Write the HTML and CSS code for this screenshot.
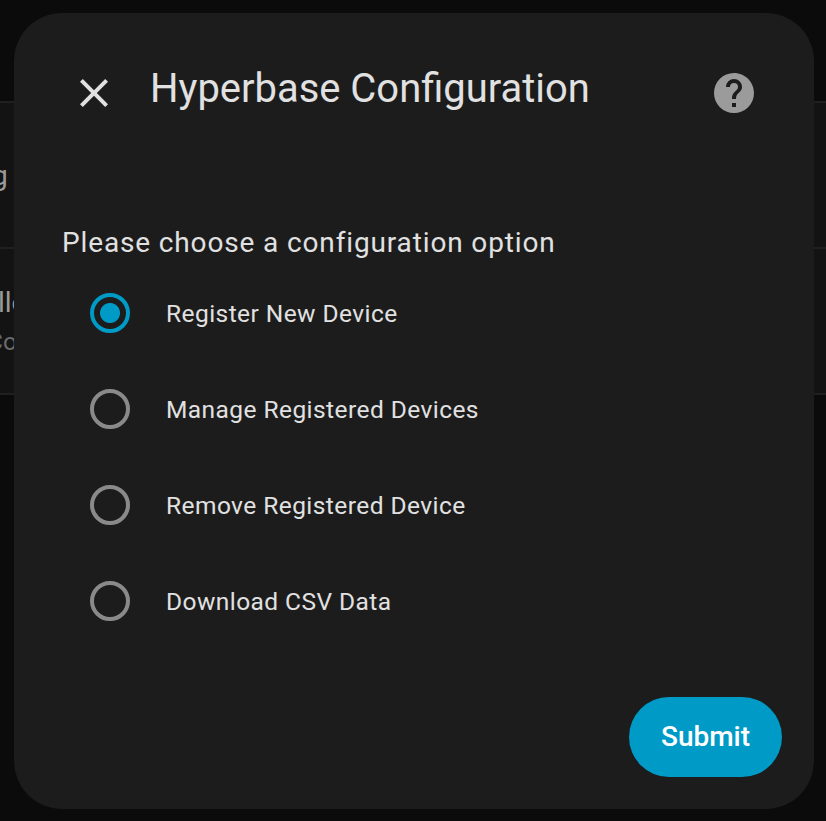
FILE: index.html
```html
<!DOCTYPE html>
<html lang="en">
<head>
<meta charset="utf-8">
<title>Hyperbase Configuration</title>
<link rel="stylesheet" href="styles.css">
</head>
<body>
<div class="backdrop">
  <div class="row-top"></div>
  <div class="row"><span class="primary first">g</span></div>
  <div class="row"><span class="primary">lle</span><span class="secondary">Co</span></div>
</div>
<main class="dialog">
  <header class="header">
    <svg class="close" viewBox="0 0 24 24"><path d="M19 6.41L17.59 5 12 10.59 6.41 5 5 6.41 10.59 12 5 17.59 6.41 19 12 13.41 17.59 19 19 17.59 13.41 12z"/></svg>
    <h1 class="title">Hyperbase Configuration</h1>
    <svg class="help" viewBox="0 0 24 24"><path d="M15.07 11.25l-.9.92C13.45 12.89 13 13.5 13 15h-2v-.5c0-1.11.45-2.11 1.17-2.83l1.24-1.26c.37-.36.59-.86.59-1.41a2 2 0 0 0-2-2 2 2 0 0 0-2 2H8a4 4 0 0 1 4-4 4 4 0 0 1 4 4c0 .88-.36 1.67-.93 2.25M13 19h-2v-2h2M12 2A10 10 0 0 0 2 12a10 10 0 0 0 10 10 10 10 0 0 0 10-10c0-5.53-4.5-10-10-10z"/></svg>
  </header>
  <p class="prompt">Please choose a configuration option</p>
  <div class="options">
    <label class="option"><span class="radio checked"></span><span class="label">Register New Device</span></label>
    <label class="option"><span class="radio"></span><span class="label">Manage Registered Devices</span></label>
    <label class="option"><span class="radio"></span><span class="label">Remove Registered Device</span></label>
    <label class="option"><span class="radio"></span><span class="label">Download CSV Data</span></label>
  </div>
  <footer class="footer"><button class="submit">Submit</button></footer>
</main>
</body>
</html>
```
FILE: styles.css
```css
* { box-sizing: border-box; }
body {
  margin: 0;
  height: 821px;
  overflow: hidden;
  padding: 13px 12px 12px 14px;
  background: #0b0b0b;
  color: #e1e1e1;
  font-family: Roboto, sans-serif;
}
.backdrop { position: absolute; inset: 0; }
.row-top { height: 101px; }
.row { height: 146px; border-top: 2px solid #202020; background: #131313; overflow: hidden; white-space: nowrap; }
.row:last-child { height: 148px; border-bottom: 2px solid #202020; }
.primary { display: block; margin: 35px 0 0 -2px; font-size: 28px; line-height: 38px; color: #9b9b9b; }
.first { margin: 54px 0 0 -8px; }
.secondary { display: block; margin-left: -13px; font-size: 24.5px; line-height: 40px; color: #6a6a6a; }
.dialog {
  position: relative;
  width: 800px;
  height: 796px;
  padding: 48px 32px 32px 48px;
  border-radius: 48px;
  background: #1c1c1c;
  display: flex;
  flex-direction: column;
}
.header { display: flex; height: 64px; margin-bottom: 84px; }
.close { width: 48px; height: 48px; margin: 8px 0 0 8px; fill: #e1e1e1; }
.title { flex: 1; margin: 0 0 0 32px; font-size: 39.95px; font-weight: 400; line-height: 56px; white-space: nowrap; }
.help { width: 48px; height: 48px; margin: 8px 24px 0 0; fill: #9b9b9b; }
.prompt { margin: 0; height: 56px; font-size: 28px; line-height: 68px; letter-spacing: .86px; }
.options { display: flex; flex-direction: column; }
.option { display: flex; align-items: center; height: 96px; padding-left: 28px; }
.radio { width: 40px; height: 40px; border: 4px solid #8a8a8a; border-radius: 50%; }
.radio.checked { border-color: #009ac7; background: radial-gradient(circle, #009ac7 9.5px, transparent 10.5px); }
.label { margin-left: 36px; padding-top: 1px; font-size: 24.5px; line-height: 40px; letter-spacing: .4375px; }
.footer { margin-top: auto; display: flex; justify-content: flex-end; }
.submit { width: 153px; height: 80px; padding: 0; border: 0; border-radius: 40px; background: #009ac7; color: #fff; font: 500 28px/80px Roboto, sans-serif; }
```
